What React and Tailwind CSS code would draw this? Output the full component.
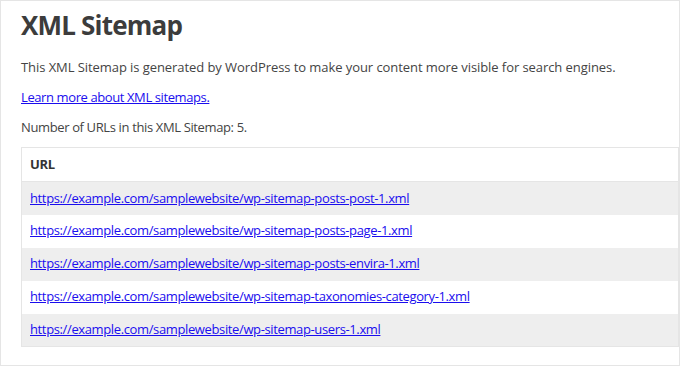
import React from 'react';

const urls = [
  'https://example.com/samplewebsite/wp-sitemap-posts-post-1.xml',
  'https://example.com/samplewebsite/wp-sitemap-posts-page-1.xml',
  'https://example.com/samplewebsite/wp-sitemap-posts-envira-1.xml',
  'https://example.com/samplewebsite/wp-sitemap-taxonomies-category-1.xml',
  'https://example.com/samplewebsite/wp-sitemap-users-1.xml',
];

export default function App() {
  return (
    <div className="w-[680px] h-[366px] bg-white border border-[#e5e5e5] pl-[20px] font-['Open_Sans',sans-serif] text-[#444] overflow-hidden">
      <h1 className="text-[26px] tracking-[-0.8px] font-bold leading-none mt-[11px] text-[#3c3c3c]">XML Sitemap</h1>
      <p className="text-[13px] leading-[20px] mt-[19px] tracking-[-0.07px]">
        This XML Sitemap is generated by WordPress to make your content more visible for search engines.
      </p>
      <p className="text-[13px] leading-[20px] mt-[10px] tracking-[-0.4px]">
        <a href="#" className="text-[#1a0dee] underline">Learn more about XML sitemaps.</a>
      </p>
      <p className="text-[13px] leading-[20px] mt-[10px] tracking-[-0.37px]">Number of URLs in this XML Sitemap: 5.</p>
      <table className="w-full mt-[10px] border border-[#e5e5e5] border-collapse text-[13px] tracking-[-0.37px]">
        <thead>
          <tr>
            <th className="text-left font-bold text-[#333] h-[34px] px-[8px] border-b border-[#e5e5e5]">URL</th>
          </tr>
        </thead>
        <tbody>
          {urls.map((u, i) => (
            <tr key={u} className={i % 2 === 0 ? 'bg-[#eeeeee]' : 'bg-white'}>
              <td className="h-[33px] px-[8px]">
                <a href={u} className="text-[#1a0dee] underline">{u}</a>
              </td>
            </tr>
          ))}
        </tbody>
      </table>
    </div>
  );
}
